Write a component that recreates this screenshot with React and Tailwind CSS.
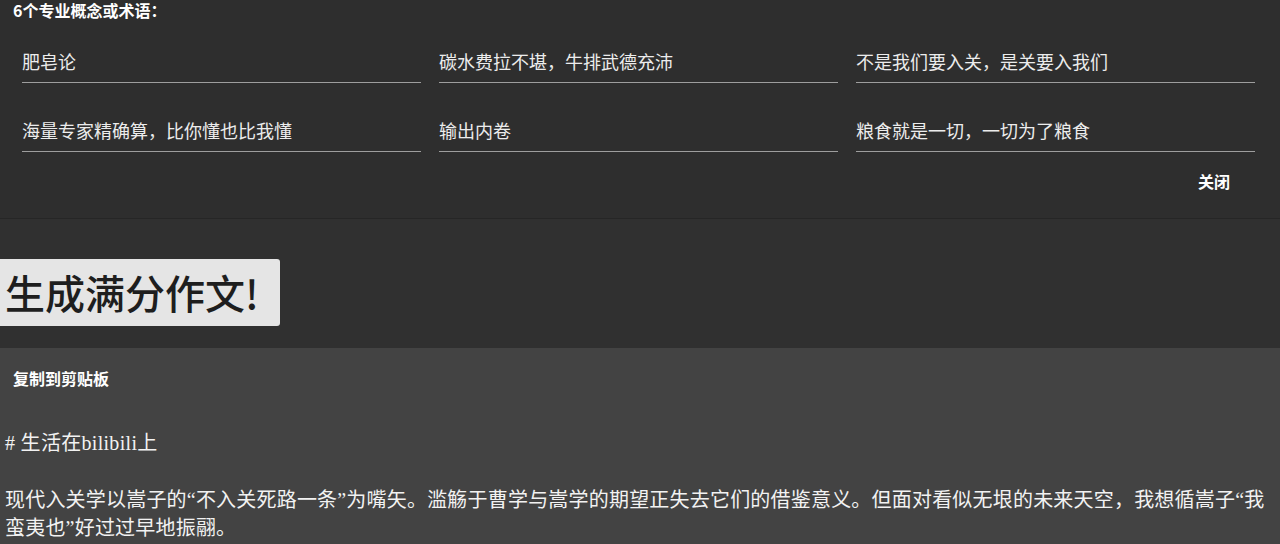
const terms = [
  "肥皂论",
  "碳水费拉不堪，牛排武德充沛",
  "不是我们要入关，是关要入我们",
  "海量专家精确算，比你懂也比我懂",
  "输出内卷",
  "粮食就是一切，一切为了粮食",
]

const sans = { fontFamily: '"Noto Sans CJK SC", "Noto Sans", sans-serif' }

export default function App() {
  return (
    <div className="min-h-screen bg-[#303030]" style={sans}>
      <section className="h-[219px] border-b border-[#262626] bg-[#2e2e2e]">
        <p className="pl-[13px] text-[16px] font-bold leading-[20px] text-white">6个专业概念或术语：</p>
        <div className="mt-[29px] grid grid-cols-3 gap-x-[18px] gap-y-[35px] pl-[22px] pr-[25px]">
          {terms.map((t) => (
            <div key={t} className="border-b border-[#9e9e9e] pb-[9px] text-[18px] leading-[24px] text-[#ececec]">
              {t}
            </div>
          ))}
        </div>
        <div className="mt-[18px] flex justify-end pr-[50px]">
          <button type="button" className="text-[16px] font-bold leading-[22px] text-white">关闭</button>
        </div>
      </section>

      <div className="h-[129px] pt-[40px]">
        <button type="button" className="h-[67px] rounded-r-[3px] bg-[#e5e5e5] pl-[5px] pr-[21px] text-[40px] font-medium leading-[67px] text-[#1e1e1e]">
          生成满分作文!
        </button>
      </div>

      <div className="min-h-[196px] bg-[#434343] pl-[5px] pr-[5px]" style={{ fontFamily: '"Liberation Serif", "Noto Sans CJK SC", serif' }}>
        <button type="button" className="ml-[8px] mt-[19px] text-[16px] font-bold leading-[22px] text-white" style={sans}>复制到剪贴板</button>
        <p className="mt-[37px] text-[20px] leading-[28px] tracking-[0.3px] text-[#f2f2f2]"># 生活在bilibili上</p>
        <p className="mt-[29px] text-[20px] leading-[28px] tracking-[0.2px] text-[#f2f2f2]">
          现代入关学以嵩子的“不入关死路一条”为嘴矢。滥觞于曹学与嵩学的期望正失去它们的借鉴意义。但面对看似无垠的未来天空，我想循嵩子“我蛮夷也”好过过早地振翮。
        </p>
      </div>
    </div>
  )
}
